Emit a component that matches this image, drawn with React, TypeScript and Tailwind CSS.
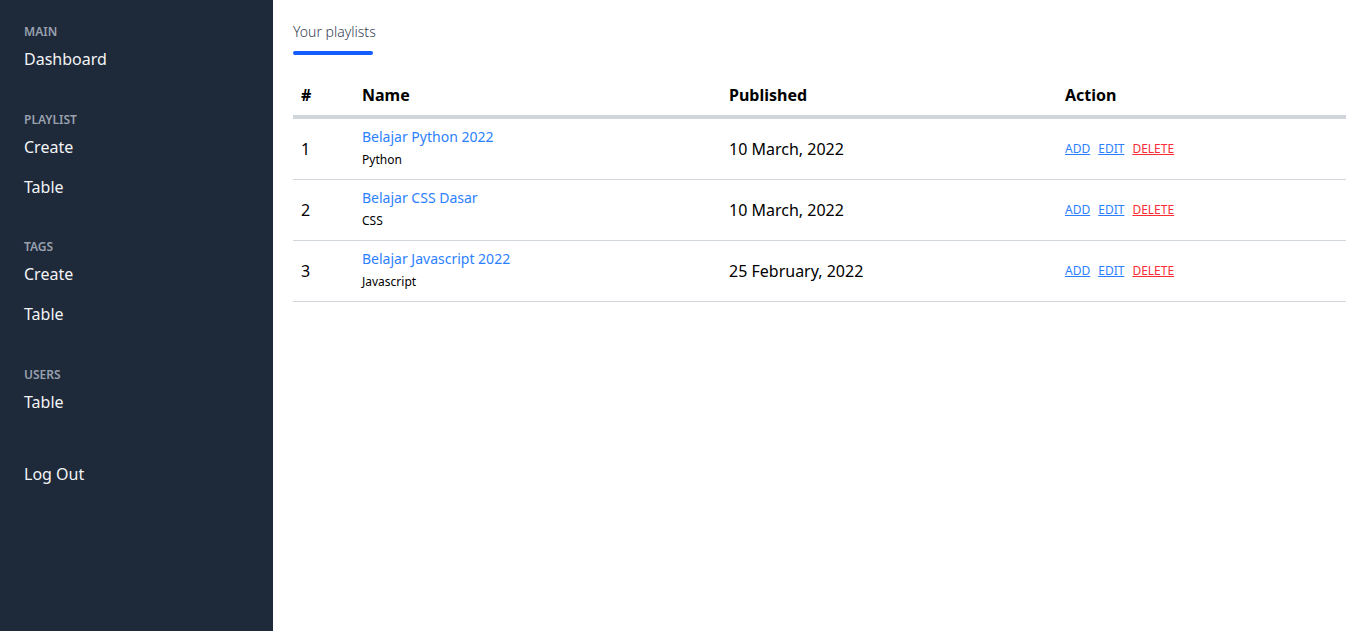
import React from "react";

const playlists = [
    { id: 1, name: "Belajar Python 2022", tag: "Python", published: "10 March, 2022" },
    { id: 2, name: "Belajar CSS Dasar", tag: "CSS", published: "10 March, 2022" },
    { id: 3, name: "Belajar Javascript 2022", tag: "Javascript", published: "25 February, 2022" },
];

const menu = [
    { label: "MAIN", items: ["Dashboard"] },
    { label: "PLAYLIST", items: ["Create", "Table"] },
    { label: "TAGS", items: ["Create", "Table"] },
    { label: "USERS", items: ["Table"] },
];

function Sidebar() {
    return (
        <aside className="w-[273px] shrink-0 bg-gray-800 pl-6 pt-[24px]">
            {menu.map((section) => (
                <div key={section.label} className="mb-[40.5px]">
                    <p className="text-xs font-semibold text-gray-400 leading-4">{section.label}</p>
                    <ul className="mt-[7px] flex flex-col gap-[16px]">
                        {section.items.map((item, i) => (
                            <li key={i}>
                                <a href="#" className="text-base text-gray-100 leading-6">
                                    {item}
                                </a>
                            </li>
                        ))}
                    </ul>
                </div>
            ))}
            <a href="#" className="block mt-[48px] text-base text-gray-100 leading-6">
                Log Out
            </a>
        </aside>
    );
}

export default function App() {
    return (
        <div
            className="flex min-h-[631px] w-full"
            style={{ fontFamily: '"Noto Sans", sans-serif' }}
        >
            <Sidebar />
            <main className="flex-1 bg-white px-5 pt-[19px]">
                <div className="inline-block">
                    <h2 className="text-sm font-light text-gray-700 leading-5">Your playlists</h2>
                    <div className="mt-[9px] h-1 w-20 rounded-full bg-blue-600" />
                </div>
                <table className="mt-[20px] w-full text-left">
                    <thead>
                        <tr className="border-b-4 border-gray-300">
                            <th className="w-[61px] px-2 py-2 text-base font-bold text-black leading-6">#</th>
                            <th className="w-[367px] px-2 py-2 text-base font-bold text-black leading-6">Name</th>
                            <th className="w-[336px] px-2 py-2 text-base font-bold text-black leading-6">Published</th>
                            <th className="px-2 py-2 text-base font-bold text-black leading-6">Action</th>
                        </tr>
                    </thead>
                    <tbody>
                        {playlists.map((p) => (
                            <tr key={p.id} className="border-b border-gray-300">
                                <td className="px-2 text-base text-black">{p.id}</td>
                                <td className="px-2 pt-[8px] pb-[9px]">
                                    <a href="#" className="block text-sm text-blue-500 leading-5">
                                        {p.name}
                                    </a>
                                    <p className="mt-[3px] text-xs text-black leading-5">{p.tag}</p>
                                </td>
                                <td className="px-2 text-base text-black">{p.published}</td>
                                <td className="px-2">
                                    <div className="flex items-center gap-2 text-xs">
                                        <a href="#" className="text-blue-500 underline">ADD</a>
                                        <a href="#" className="text-blue-500 underline">EDIT</a>
                                        <a href="#" className="text-red-500 underline">DELETE</a>
                                    </div>
                                </td>
                            </tr>
                        ))}
                    </tbody>
                </table>
            </main>
        </div>
    );
}
